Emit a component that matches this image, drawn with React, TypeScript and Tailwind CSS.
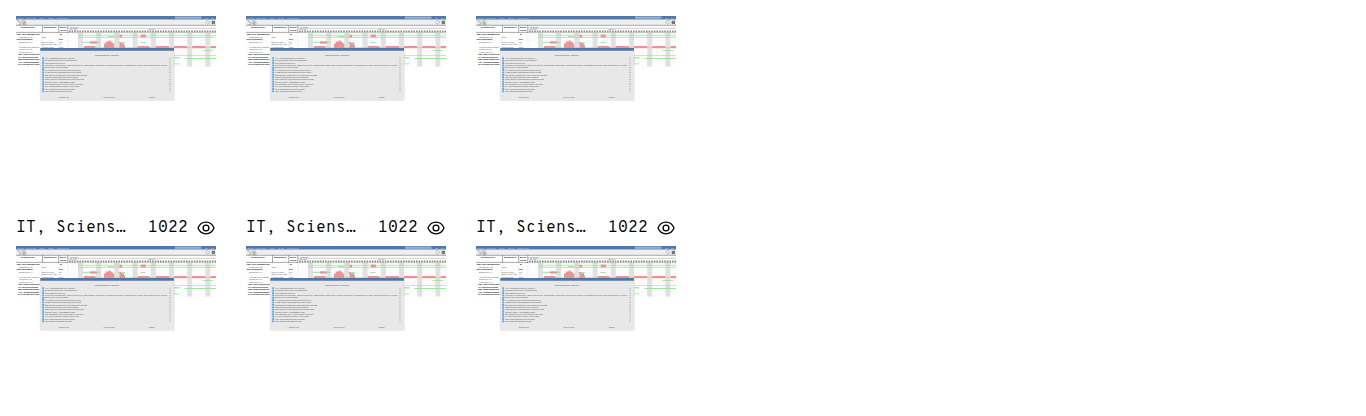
type Label = { x: number; y: number; w: number; t: string; bold?: boolean; fill?: string };

const weekends = [62, 80.2, 98.4, 116.6, 134.8, 153, 171.2, 189.4];

const tableLabels: Label[] = [
  { x: 5, y: 11.6, w: 14, t: "Исполнитель", bold: true },
  { x: 27.8, y: 11.6, w: 13, t: "Должность", bold: true },
  { x: 43.8, y: 11.6, w: 6.5, t: "Всего", bold: true },
  { x: 43.8, y: 14.6, w: 6.5, t: "часов", bold: true },
  { x: 53, y: 11.5, w: 9, t: "Авг 2015" },
  { x: 54, y: 14.3, w: 7, t: "31 (08)" },
  { x: 132.5, y: 14.3, w: 7, t: "32 (09)" },
  { x: 0.5, y: 19.1, w: 23, t: "СМР Цех управления", bold: true },
  { x: 3, y: 21.5, w: 14, t: "Самойлов Г. В." },
  { x: 26, y: 21.5, w: 4, t: "ГИП" },
  { x: 44, y: 19.1, w: 1.5, t: "8", bold: true },
  { x: 0.5, y: 24, w: 16, t: "Проектировщики", bold: true },
  { x: 43, y: 24, w: 4, t: "32.0", bold: true },
  { x: 3, y: 26.6, w: 14, t: "Васильев П. Н." },
  { x: 25.5, y: 26.6, w: 12, t: "Инженер ПТО" },
  { x: 43, y: 26.6, w: 3, t: "17" },
  { x: 25.5, y: 29.2, w: 15, t: "Главный спец. №2" },
  { x: 43.5, y: 29.2, w: 1.5, t: "6" },
  { x: 3, y: 31.7, w: 20, t: "Начальник отдела" },
  { x: 25.5, y: 31.7, w: 12, t: "Конструктор" },
  { x: 43, y: 31.7, w: 4, t: "102" },
  { x: 3, y: 34.2, w: 13, t: "Соловьев Г. Д." },
  { x: 3, y: 36.8, w: 14, t: "Кравченко П. П." },
  { x: 2, y: 39.3, w: 21.5, t: "ОВК Отдел отопления", bold: true },
  { x: 2, y: 41.7, w: 20, t: "ЭТ Электротехника", bold: true },
  { x: 2, y: 44.1, w: 21.5, t: "ПВК Водоотведение", bold: true },
  { x: 2, y: 46.5, w: 21, t: "АКК Автоматизация", bold: true },
  { x: 2, y: 48.9, w: 21.5, t: "ГП Генеральный план", bold: true },
];

const options: [string, number][] = [
  ["АСУ Автоматизированные системы", 30],
  ["ВК Водоснабжение и канализация", 32],
  ["ГИП Главный инженер", 20],
  ["Генеральный директор, главный инженер, заместитель директора, начальник отдела, руководитель группы, ведущий инженер, техник", 122],
  ["Инженеры 2 категории", 23],
  ["КЖ Отдел конструкций железобетонных", 36],
  ["КМД Отдел металлоконструкций", 36],
  ["ОВ Отдел отопления и вентиляции зданий", 42],
  ["Отдел сметной документации", 33],
  ["ПОС Проект организации строительства", 39],
  ["СМР Цех управления", 30],
  ["СС Слаботочные сети и связь объекта", 38],
  ["ТХ Технологические решения", 34],
  ["ЭМ Электротехнические", 30],
  ["ЭО Электроосвещение", 27],
];

const greens: [number, number, number, number][] = [
  [62, 18.8, 138, 0.7], [62, 20.8, 138, 0.8], [67, 25.8, 17, 1],
  [102, 26, 7, 0.8], [124.5, 26, 5, 0.9], [67, 31, 133, 0.6],
  [92, 20.2, 6, 1], [186.5, 34, 10.5, 0.8], [157, 39, 43, 0.6],
  [157, 41.2, 6.5, 1.2], [168.5, 42.1, 31.5, 0.9], [157, 44.4, 2, 0.9], [157, 47.5, 6.5, 0.8],
];

const reds = [
  "M103.5 18.8h2.6v2.8h-2.6z", "M124.8 18.6h5v2.7h-5z", "M74 25.4h6.8v2.2H74z",
  "M88 32v-4.5h1.7v-2h3v-1h2v1.3h2v1.6h1.6V32z", "M103.5 32v-6h1.5v1.3h3v2h1V32z",
  "M68 30h11.5v2H68z", "M121.7 30h10.5l2 1v1.5h-12.5z", "M139.7 30H153v2.2h-13.3z",
  "M158 30h13.2v2.2H158z", "M176.2 30h13.2v2.2h-13.2z", "M194.6 30h5.4v2.2h-5.4z",
];

function Words({ x, y, w, t, bold, fill = "#555" }: Label) {
  return (
    <text x={x} y={y} fontSize="2.3" fontWeight={bold ? 700 : 400} fill={bold ? "#111" : fill} textLength={w} lengthAdjust="spacingAndGlyphs">
      {t}
    </text>
  );
}

function Preview() {
  return (
    <svg viewBox="0 0 200 200" className="block size-[200px] overflow-visible font-['Liberation_Sans',sans-serif] tracking-normal" aria-hidden="true">
      <rect width="200" height="3.7" fill="#5078a8" />
      <rect x="159" y="0.4" width="26.5" height="2.5" fill="#91aecb" />
      {([[1, 7, "Проект"], [10, 10, "Сотрудники"], [23, 6, "Отчет"], [32, 6, "Окна"], [41, 12, "Инструменты"], [189, 3, "Ок"], [195, 3, "Вх"]] as const).map(([x, w, t]) => (
        <Words key={x} x={x} y={2.7} w={w} t={t} fill="#c4d4e6" />
      ))}
      <rect y="3.7" width="200" height="5.5" fill="#eeeeee" />
      <g fill="none" stroke="#999" strokeWidth="0.6">
        <path d="M1 4.7h2v1.5h1.5v2.3H2.3M6.2 4.8h2.6v3H6.2zM7.5 6.3h2.5v2.5H7.5z" />
        <path d="M191.7 4.3l2 2-2 2-2-2z" />
      </g>
      <rect x="195.7" y="4.8" width="3.3" height="3.3" fill="#777" />
      {weekends.map((x) => <rect key={x} x={x} y="17" width="5" height="33.5" fill="#e0e0e0" />)}
      <path d="M0 19.9H200M0 22.2H200M0 24.5H200M0 27.2H200M0 29.7H200M0 35H200M0 37.5H200M0 40H200M0 46H200M0 50H200" stroke="#e9e9e9" strokeWidth="0.3" />
      <g stroke="#555" strokeWidth="0.5" fill="none">
        <path d="M0 9.3H200M0 16.4H52M26.5 9.3V16.4M42.7 9.3V16.4M51.8 9.3V17" />
        <path d="M52 12.3H200" stroke="#999" />
      </g>
      <path d="M26 17V50M42.5 17V50M51.8 17V50" stroke="#ddd" strokeWidth="0.35" />
      <path d="M53 15.4H200" stroke="#666" strokeWidth="2" strokeDasharray="1.6 1" opacity="0.75" />
      <path d="M52 16.7H200" stroke="#999" strokeWidth="0.4" />
      {tableLabels.map((l, i) => <Words key={i} {...l} />)}
      {greens.map(([x, y, w, h], i) => <rect key={i} x={x} y={y} width={w} height={h} fill="#93e493" />)}
      {reds.map((d) => <path key={d} d={d} fill="#eb9292" />)}
      <rect x="23.8" y="32.4" width="134.8" height="52.4" rx="1.3" fill="#aaa" opacity="0.3" />
      <rect x="24.5" y="32" width="133.3" height="51.8" rx="1" fill="#e8e8e8" />
      <path d="M24.3 32H158v2.7H24.3z" fill="#4f78a9" />
      <Words x={79} y={39.6} w={24} t="Исполнитель задачи" fill="#555" />
      {options.map(([t, w], i) => (
        <g key={t}>
          <rect x="26.2" y={41.3 + i * 2.36} width="1.9" height="1.9" rx="0.4" fill="#5ba2e8" />
          <Words x={29} y={43 + i * 2.36} w={w} t={t} fill="#555" />
          <path d={`M153 ${42.2 + i * 2.36}h2`} stroke="#c4c4c4" strokeWidth="1.1" />
        </g>
      ))}
      <Words x={43} y={82} w={10} t="Выбрать всё" />
      <Words x={87.5} y={82} w={11} t="Снять выбор" />
      <Words x={132.5} y={82} w={6} t="Готово" />
    </svg>
  );
}

function EyeIcon() {
  return (
    <svg viewBox="0 0 18 14" className="mr-px ml-auto h-[14px] w-[18px] shrink-0" fill="none" stroke="currentColor" strokeWidth="1.3" strokeLinejoin="round" aria-hidden="true">
      <path d="M1 7C4.3-.8 13.7-.8 17 7C13.7 14.8 4.3 14.8 1 7Z" />
      <circle cx="9" cy="7" r="2.9" />
    </svg>
  );
}

function Card({ captioned }: { captioned: boolean }) {
  return (
    <article className="w-[200px]">
      <Preview />
      {captioned && (
        <div className="flex h-6 items-center">
          <h2 className="w-[112px] whitespace-nowrap">IT, Sciens…</h2>
          <span className="ml-5">1022</span>
          <EyeIcon />
        </div>
      )}
    </article>
  );
}

export default function App() {
  return (
    <main className="h-[416px] overflow-hidden bg-white p-4 font-['Overpass_Mono','Liberation_Mono',monospace] text-base tracking-[0.14px] text-black">
      <div className="grid grid-cols-[repeat(3,200px)] gap-x-[30px] gap-y-1.5">
        {Array.from({ length: 6 }, (_, i) => <Card key={i} captioned={i < 3} />)}
      </div>
    </main>
  );
}
